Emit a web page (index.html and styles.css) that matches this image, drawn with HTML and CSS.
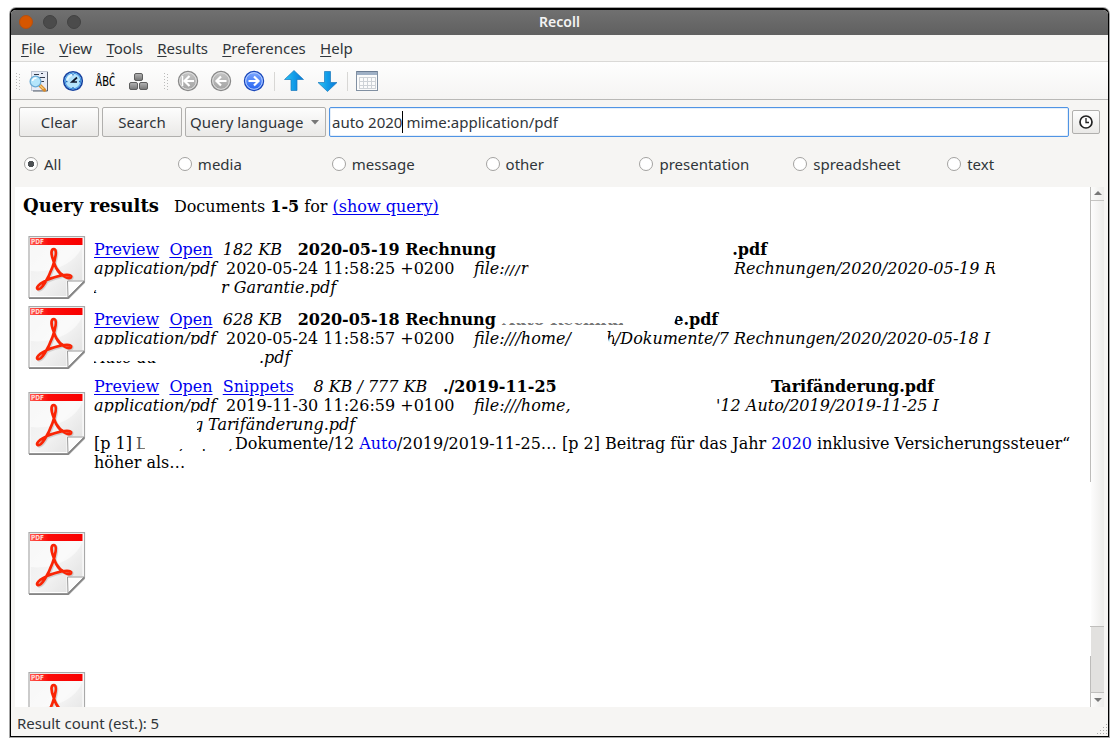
FILE: index.html
```html
<!DOCTYPE html>
<html lang="en">
<head>
<meta charset="utf-8">
<title>Recoll</title>
<link rel="stylesheet" href="styles.css">
</head>
<body>
<svg class="defs" width="0" height="0">
  <defs>
    <linearGradient id="page" x1="0" y1="0" x2="1" y2="1"><stop offset="0" stop-color="#ededed"/><stop offset=".5" stop-color="#f4f4f4"/><stop offset="1" stop-color="#dedede"/></linearGradient>
    <linearGradient id="blueArrow" x1="0" x2="1"><stop offset="0" stop-color="#2cc4f2"/><stop offset=".5" stop-color="#129ce8"/><stop offset="1" stop-color="#0878d8"/></linearGradient>
    <linearGradient id="greyBall" x1="0" y1="0" x2="0" y2="1"><stop offset="0" stop-color="#c6c6c6"/><stop offset="1" stop-color="#a2a2a2"/></linearGradient>
    <linearGradient id="blueBall" x1="0" y1="0" x2="0" y2="1"><stop offset="0" stop-color="#7fa9ff"/><stop offset="1" stop-color="#2160f0"/></linearGradient>
    <linearGradient id="cube" x1="0" y1="0" x2="0" y2="1"><stop offset="0" stop-color="#b5b5b5"/><stop offset="1" stop-color="#747474"/></linearGradient>
    <linearGradient id="redBar" x1="0" x2="1"><stop offset="0" stop-color="#ff5a50"/><stop offset=".35" stop-color="#fb0d0a"/><stop offset="1" stop-color="#f80000"/></linearGradient>
    <symbol id="pdf" viewBox="0 0 58 64">
      <path d="M2 1.500H57V47L41 63H1.500V1.500Z" fill="#777" opacity=".45"/>
      <path d="M1 .700H56.500V45.500L40 61.500H1Z" fill="#fff" stroke="#a9a9a9" stroke-width="1.200"/>
      <path d="M2.500 2.500H54.500V44.500H38.500V60H2.500Z" fill="url(#page)"/>
      <path d="M2.500 9H54.500C50 25 27 38 2.500 35Z" fill="#fff" opacity=".55"/>
      <path d="M39.500 45H56L40 61Z" fill="#fdfdfd" stroke="#999" stroke-width="1"/>
      <path d="M56.500 45.500L40 62.200H1" fill="none" stroke="#858585" stroke-width="1.500"/>
      <rect x="2" y="2" width="52.500" height="7" fill="url(#redBar)"/>
      <text x="3" y="8" class="pdf-label" textLength="13" lengthAdjust="spacingAndGlyphs">PDF</text>
      <path d="M25.500 25C22.300 17 23.300 12.800 26 13C29.400 13.500 27.500 23 24.500 31C20 43 13.500 54.500 9.800 53C6.500 51 15 44.500 26.500 41.200C37 38 43.800 38.500 43.200 40.800C42 44.700 32 39 28.500 32.500C27 30 26.300 27.500 25.500 25Z" fill="none" stroke="#888" stroke-opacity=".3" stroke-width="3" transform="translate(1 1)"/>
      <path d="M25.500 25C22.300 17 23.300 12.800 26 13C29.400 13.500 27.500 23 24.500 31C20 43 13.500 54.500 9.800 53C6.500 51 15 44.500 26.500 41.200C37 38 43.800 38.500 43.200 40.800C42 44.700 32 39 28.500 32.500C27 30 26.300 27.500 25.500 25Z" fill="none" stroke="#fa2505" stroke-width="2.700"/>
    </symbol>
  </defs>
</svg>
<div class="window">
  <header class="titlebar">
    <i class="dot close"></i><i class="dot"></i><i class="dot"></i>
    <span class="caption">Recoll</span>
  </header>
  <nav class="menubar">
    <span><u>F</u>ile</span><span><u>V</u>iew</span><span><u>T</u>ools</span><span><u>R</u>esults</span><span><u>P</u>references</span><span><u>H</u>elp</span>
  </nav>
  <div class="toolbar">
    <svg width="1097" height="37" viewBox="11 62 1097 37">
      <path d="M16.500 73V90M19.500 74V91M164.500 73V90M167.500 74V91" stroke="#bbb" stroke-dasharray="1 2"/>
      <path d="M274.500 72V91M347.500 72V91" stroke="#d8d7d5"/>
      <g>
        <rect x="31.500" y="71.500" width="16" height="19" fill="#e8ecf6" stroke="#c0c5d1"/>
        <path d="M47.500 72V91H33" fill="none" stroke="#59606f"/>
        <path d="M34 74.500H39M41 73.500H43M36 77.500H45M41 81.500H44" stroke="#333b4c" stroke-width="1.200"/>
        <path d="M40 85.500L44.500 90" stroke="#d98b2c" stroke-width="3.400" stroke-linecap="round"/>
        <path d="M40 85.500L43.500 89" stroke="#f7cf7a" stroke-width="1.200"/>
        <circle cx="35.500" cy="81.500" r="5.400" fill="#b4e5fb" stroke="#6cabd6" stroke-width="1.300"/>
        <path d="M32.500 81Q33 78 36.500 78" fill="none" stroke="#fff" stroke-width="1.500"/>
      </g>
      <g>
        <circle cx="73" cy="81" r="9.300" fill="#b5e3fb" stroke="#1742a0" stroke-width="1.600"/>
        <circle cx="73" cy="81" r="7.800" fill="none" stroke="#3b93e4" stroke-width="1"/>
        <path d="M67 81Q68 75 74 74.500" fill="none" stroke="#dff5ff" stroke-width="2"/>
        <path d="M73 74V75.500M73 87V88.500M66 81.500H67.500M79 81.500H80.500" stroke="#2566b5" stroke-width="1.300"/>
        <path d="M77 77.500L72 82H77" fill="none" stroke="#10182c" stroke-width="1.700"/>
      </g>
      <text x="95.500" y="86" class="abc" textLength="20" lengthAdjust="spacingAndGlyphs">ÅBĈ</text>
      <g fill="url(#cube)" stroke="#5e5e5e">
        <rect x="134.500" y="73.500" width="8" height="7" rx="1.500"/>
        <rect x="129.500" y="82.500" width="8" height="7" rx="1.500"/>
        <rect x="139.500" y="82.500" width="8" height="7" rx="1.500"/>
      </g>
      <g fill="url(#greyBall)" stroke="#898989" stroke-width="1.200"><circle cx="188" cy="81" r="9.600"/><circle cx="221" cy="81" r="9.600"/></g>
      <circle cx="254" cy="81" r="9.600" fill="url(#blueBall)" stroke="#1a47b8" stroke-width="1.200"/>
      <g fill="none" stroke="#e1e1e1" stroke-width="1"><circle cx="188" cy="81" r="8.300"/><circle cx="221" cy="81" r="8.300"/><circle cx="254" cy="81" r="8.300" stroke="#bcd3ff"/></g>
      <g fill="none" stroke="#fff" stroke-width="2.200">
        <path d="M182.500 76V86" stroke-width="1.500"/>
        <path d="M194 81H185M189.500 76L184.500 81L189.500 86M226.500 81H217M221 76.500L216.500 81L221 85.500M248.500 81H258M254 76.500L258.500 81L254 85.500"/>
      </g>
      <g fill="url(#blueArrow)" stroke="#1878bd" stroke-width=".7">
        <path d="M294 70.500L303.500 79.500H297V90.500H291V79.500H284.500Z"/>
        <path d="M327.500 91.500L318 82.500H324.500V71.500H330.500V82.500H337Z"/>
      </g>
      <g>
        <rect x="356.500" y="71.500" width="21" height="19" fill="#fbfbfb" stroke="#8190a2"/>
        <rect x="357" y="72" width="20" height="3" fill="#9fb0c5"/>
        <path d="M357 71.500H377" stroke="#6c7d93"/>
        <path d="M359 77.500H376M359 81.500H376M359 85.500H376M359 88.500H376M359.500 77V89M363.500 77V89M367.500 77V89M371.500 77V89M375.500 77V89" stroke="#ced2d7"/>
      </g>
    </svg>
  </div>
  <div class="search">
    <button class="btn">Clear</button>
    <button class="btn">Search</button>
    <button class="btn combo">Query language<svg width="8" height="5" viewBox="0 0 8 5"><path d="M0 0H8L4 4.500Z" fill="#777"/></svg></button>
    <div class="field"><span>auto 2020</span><i class="caret"></i><span>mime:application/pdf</span></div>
    <button class="history"><svg width="16" height="16" viewBox="0 0 16 16"><circle cx="8" cy="8" r="6" fill="#fff" stroke="#222" stroke-width="1.700"/><path d="M8 4V8.500H11" fill="none" stroke="#222" stroke-width="1.300"/></svg></button>
  </div>
  <div class="filters">
    <label><i class="radio on"></i>All</label><label><i class="radio"></i>media</label><label><i class="radio"></i>message</label><label><i class="radio"></i>other</label><label><i class="radio"></i>presentation</label><label><i class="radio"></i>spreadsheet</label><label><i class="radio"></i>text</label>
  </div>
  <div class="body">
    <main class="results">
      <div class="summary"><h1>Query results</h1><p>Documents <b>1-5</b> for <a>(show query)</a></p></div>
      <article class="item first">
        <svg class="pdf"><use href="#pdf"/></svg>
        <div class="text">
          <p><a class="c-preview">Preview</a><a class="c-open">Open</a><em class="c-size">182 KB</em><b class="c-title">2020-05-19 Rechnung</b><b class="at-732">.pdf</b></p>
          <p><em class="c-mime cut-17">application/pdf</em><span class="c-date">2020-05-24 11:58:25 +0200</span><em>file:</em><em class="slashes">///r</em><em class="after-url">Rechnungen/2020/2020-05-19 R</em></p>
          <p><em class="s-a">A</em><em>r Garantie.pdf</em></p>
        </div>
      </article>
      <article class="item second">
        <svg class="pdf"><use href="#pdf"/></svg>
        <div class="text">
          <p><a class="c-preview">Preview</a><a class="c-open">Open</a><em class="c-size">628 KB</em><b class="c-title">2020-05-18 Rechnung</b><b class="s-title">Auto Rechnung</b><b class="shave-e">e</b><b>.pdf</b></p>
          <p><em class="c-mime cut-15">application/pdf</em><span class="c-date">2020-05-24 11:58:57 +0200</span><em class="c-home">file:///home/</em><em class="shave-h">h</em><em class="doc-path">/Dokumente/7 Rechnungen/2020/2020-05-18 I</em></p>
          <p><em class="s-b">Auto au</em><em>.pdf</em></p>
        </div>
      </article>
      <article class="item third">
        <svg class="pdf"><use href="#pdf"/></svg>
        <div class="text">
          <p><a class="c-preview">Preview</a><a class="c-open">Open</a><a class="c-snip">Snippets</a><em class="c-size3">8 KB / 777 KB</em><b class="c-title3">./2019-11-25</b><b>Tarifänderung.pdf</b></p>
          <p><em class="c-mime cut-16">application/pdf</em><span class="c-date">2019-11-30 11:26:59 +0100</span><em class="c-home3">file:///home,</em><em>'12 Auto/2019/2019-11-25 I</em></p>
          <p><em class="shave-g">g</em><em>Tarifänderung.pdf</em></p>
          <p><span class="page-ref">[p 1]</span><span class="scrap-l">L</span><span class="scrap-p">, p ,</span><span>Dokumente/12 <mark>Auto</mark>/2019/2019-11-25… [p 2] Beitrag für das Jahr <mark>2020</mark> inklusive Versicherungssteuer“</span></p>
          <p>höher als…</p>
        </div>
      </article>
      <article class="item fourth"><svg class="pdf"><use href="#pdf"/></svg></article>
      <article class="item fifth"><svg class="pdf"><use href="#pdf"/></svg></article>
    </main>
    <div class="scrollbar">
      <i class="step up"></i><i class="trough"></i><i class="thumb"></i><i class="step down"></i>
    </div>
  </div>
  <footer class="status"><span>Result count (est.): 5</span>
    <svg width="12" height="12" viewBox="0 0 12 12"><path d="M10 1.500h1M7 4.500h1m2 0h1M4 7.500h1m2 0h1m2 0h1M1 10.500h1m2 0h1m2 0h1m2 0h1" stroke="#aaa"/></svg>
  </footer>
</div>
</body>
</html>
```
FILE: styles.css
```css
* { box-sizing: border-box; }
body { margin: 0; padding: 8px 10px; height: 747px; overflow: hidden; background: #fff; color: #30353a; font: 15px/20px "Noto Sans", sans-serif; }
.defs { position: absolute; }
.pdf-label { font: bold 7px "DejaVu Sans", sans-serif; fill: #ffd9d5; }
.window { width: 1099px; height: 729px; border: 1px solid #000; border-top-width: 2px; border-radius: 6px 6px 0 0; background: #f6f5f3; overflow: hidden; display: flex; flex-direction: column; box-shadow: 0 0 0 1px rgba(0,0,0,.35); }
.titlebar { position: relative; flex: none; height: 25px; display: flex; align-items: center; gap: 10px; padding: 0 8px 2px; background: linear-gradient(#707070, #606060); }
.dot { width: 14px; height: 14px; border-radius: 50%; background: #4b4b4b; border: 1px solid #424242; }
.dot.close { background: #d65600; border-color: #b55010; }
.caption { position: absolute; left: 0; right: 0; text-align: center; color: #f4f4f4; font-size: 14px; font-weight: 600; }
.menubar { flex: none; height: 27px; display: flex; gap: 14.300px; padding: 3px 10px 0; border-bottom: 1px solid #dad9d7; }
.menubar u { text-underline-offset: 2px; text-decoration-thickness: 1px; }
.toolbar { flex: none; height: 38px; border-bottom: 1px solid #b9b8b6; background: linear-gradient(#fefefe, #f5f4f3); }
.toolbar svg { display: block; }
.abc { font: 14px "DejaVu Sans Mono", monospace; fill: #000; }
.search { flex: none; height: 46px; display: flex; align-items: flex-start; padding: 7px 8px 0; }
.btn { width: 80px; height: 30px; margin: 0 3px 0 0; padding: 0; border: 1px solid #b0afad; border-radius: 2px; background: linear-gradient(#fdfdfd, #eae9e7); color: inherit; font: inherit; }
.combo { width: 141px; display: flex; align-items: center; justify-content: space-between; padding: 0 6px 0 4px; }
.field { width: 740px; height: 30px; display: flex; align-items: center; border: 1px solid #5094e4; border-radius: 2px; background: #fff; padding-left: 2px; box-shadow: inset 0 0 0 1px #e5effa; }
.caret { width: 1px; height: 22px; background: #000; margin: 0 3px 0 0; }
.history { width: 28px; height: 24px; margin: 3px 0 0 3px; padding: 0; display: flex; align-items: center; justify-content: center; border: 1px solid #b0afad; border-radius: 2px; background: linear-gradient(#fdfdfd, #eae9e7); }
.filters { flex: none; height: 41px; display: grid; grid-template-columns: repeat(7, 153.870px); padding: 0 0 0 13px; }
.filters label { display: flex; height: 36px; align-items: center; gap: 6px; }
.radio { width: 14px; height: 14px; border: 1px solid #a3a2a0; border-radius: 50%; background: #fff; }
.radio.on { background: radial-gradient(circle, #4e5255 0 3px, #fff 3.500px); }
.body { flex: none; height: 520px; display: flex; padding: 0 4px; }
.results { width: 1075px; height: 520px; overflow: hidden; background: #fff; color: #000; font: 16px/19px "DejaVu Serif", serif; }
.results a { color: #00e; text-decoration: underline; text-decoration-thickness: 1px; text-underline-offset: 2px; }
.results mark { background: none; color: #00e; }
.summary { height: 49px; display: flex; align-items: baseline; padding: 8px 8px 0; gap: 15px; }
.summary h1 { margin: 0; font-size: 18px; line-height: 22px; }
.summary p { margin: 0; }
.item { display: flex; align-items: flex-start; gap: 8px; padding-left: 13px; }
.pdf { flex: none; width: 58px; height: 64px; }
.first, .second { height: 70px; }
.third { height: 226px; }
.third .pdf { margin-top: 16px; }
.fourth { height: 140px; margin-top: -70px; }
.text { padding-top: 4px; }
.third .text { padding-top: 1px; }
.text p { height: 19px; margin: 0; display: flex; white-space: pre; }
.text p > * { flex: none; }
.c-preview, .c-open, .c-snip { margin-right: 10.200px; }
.c-size { width: 75px; }
.c-title { width: 199.500px; letter-spacing: -.04px; }
.at-732 { margin-left: 235px; }
.c-mime { width: 132px; }
.cut-15 { clip-path: inset(0 0 3.500px 0); }
.cut-16 { clip-path: inset(0 0 2.500px 0); }
.cut-17 { clip-path: inset(0 0 1.500px 0); }
.c-date { width: 248px; }
.slashes { clip-path: inset(6px 0 0 0); }
.after-url { position: absolute; margin-left: 640px; clip-path: polygon(0 0, 99% 0, 99% 45%, 100% 100%, 98% 100%, 97.200% 60%, 97% 100%, 0 100%); }
.s-a { width: 127px; clip-path: inset(12px 122px 3px 0); }
.s-b { width: 165px; clip-path: inset(13px 100px 3px 0); }
.s-title { width: 176px; padding-left: 5px; color: #777; clip-path: inset(13px 50px 3px 0); }
.shave-e { clip-path: polygon(55% 0, 100% 0, 100% 100%, 50% 100%, 10% 68%); }
.c-home { width: 132px; }
.shave-h { width: 9px; clip-path: polygon(0 0, 50% 0, 100% 60%, 100% 100%, 50% 100%); }
.doc-path { letter-spacing: -.03px; }
.c-size3 { margin-left: 9.500px; width: 129.500px; }
.c-title3 { width: 328px; }
.c-home3 { width: 242px; }
.shave-g { margin-left: 99px; width: 15px; clip-path: inset(5px 0 2px 4px); }
.page-ref { width: 42px; }
.scrap-l { width: 43px; clip-path: polygon(0 0, 5px 0, 9px 15px, 0 15px); color: #555; }
.scrap-p { width: 56px; word-spacing: 12px; clip-path: inset(15px 0 2px 0); }
.scrollbar { width: 14px; display: flex; flex-direction: column; background: linear-gradient(90deg, #fcfcfb, #edecea); border-left: 1px solid #bdbcba; }
.step { height: 14px; display: flex; justify-content: center; align-items: center; border-bottom: 1px solid #c5c4c2; }
.step::after { content: ""; border: 4px solid transparent; border-top-width: 0; border-bottom-color: #777; }
.down { border: 0; }
.down::after { border-width: 4px 4px 0; border-color: #777 transparent; }
.trough { height: 426px; margin-left: -1px; background: linear-gradient(#bdbcba 0 281px, #fff 281px) 0 0 / 1px 100% no-repeat, linear-gradient(90deg, #fefefe, #edecea); }
.thumb { height: 67px; margin-left: -1px; border: solid #c0bfbd; border-width: 1px 0; background: linear-gradient(#fff 0 29px, #bdbcba 29px) 0 0 / 1px 100% no-repeat, #e2e1df; }
.trough { height: 427px; }
.status { flex: 1; display: flex; justify-content: space-between; padding: 6px 0 0 6px; }
.status svg { margin-top: 10px; }
```
